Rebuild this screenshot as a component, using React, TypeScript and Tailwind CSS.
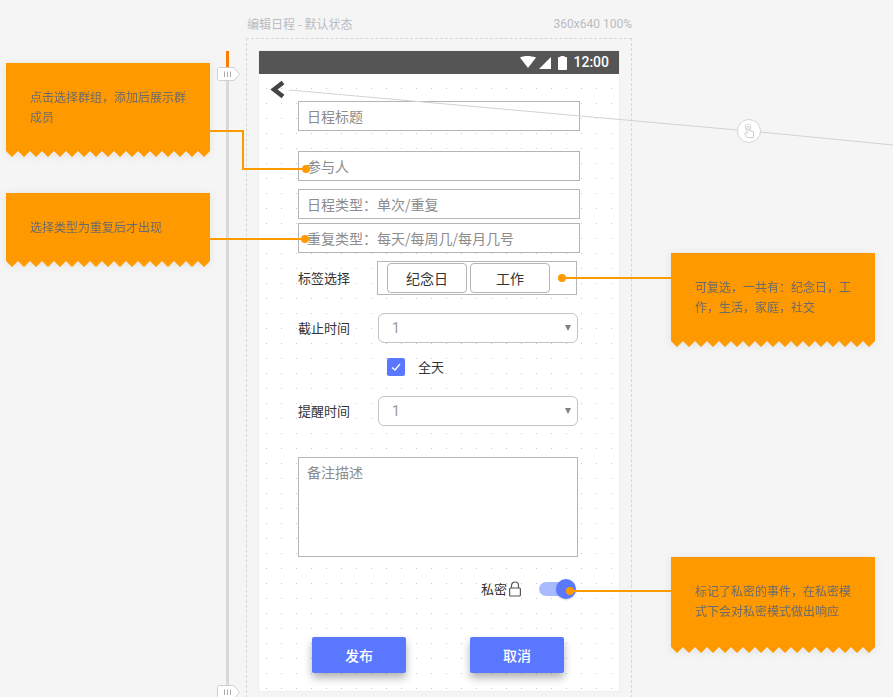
const ZIGZAG = Array.from({ length: 17 }, (_, i) => `${i * 12},0 ${i * 12 + 6},6 ${i * 12 + 12},0`).join(" ");

const notes = [
  { id: "group", box: "left-[6px] top-[63px]", body: "h-[88px] pt-[24px]", text: ["点击选择群组，添加后展示群", "成员"] },
  { id: "type", box: "left-[6px] top-[193px]", body: "h-[68px] pt-[24px]", text: ["选择类型为重复后才出现"] },
  { id: "tags", box: "left-[671px] top-[253px]", body: "h-[88px] pt-[24px]", text: ["可复选，一共有：纪念日，工", "作，生活，家庭，社交"] },
  { id: "private", box: "left-[671px] top-[557px]", body: "h-[90px] pt-[24px]", text: ["标记了私密的事件，在私密模", "式下会对私密模式做出响应"] },
];

function Note({ box, body, text }: { box: string; body: string; text: string[] }) {
  return (
    <div className={`absolute w-[204px] drop-shadow-[0_1px_4px_rgba(0,0,0,0.08)] ${box}`}>
      <div className={`bg-[#ff9900] px-[24px] text-[12px] leading-[20px] text-[#6b6b6b] ${body}`}>
        {text.map((line) => (
          <p key={line} className="whitespace-nowrap">{line}</p>
        ))}
      </div>
      <svg width="204" height="6" className="block">
        <polygon points={`0,0 ${ZIGZAG} 204,0`} fill="#ff9900" />
        <polygon points="0,0 204,0 204,0 0,0" fill="#ff9900" />
      </svg>
    </div>
  );
}

function Handle({ box }: { box: string }) {
  return (
    <svg width="24" height="15" viewBox="0 0 24 15" className={`absolute ${box}`}>
      <path d="M2.5 .5H17L22.5 7.5L17 13.5H2.5A2 2 0 0 1 .5 11.5V2.5A2 2 0 0 1 2.5 .5Z" fill="#fff" stroke="#d0d0d0" />
      <path d="M7.5 4.5V10M10.5 4.5V10M13.5 4.5V10" stroke="#aaa" />
    </svg>
  );
}

function TextBox({ label, className }: { label: string; className: string }) {
  return (
    <div className={`flex h-[30px] w-[282px] items-center border border-[#b5b5b5] bg-white pl-[8px] text-[14px] text-[#8c8c8c] ${className}`}>
      {label}
    </div>
  );
}

function SelectRow({ label, className }: { label: string; className: string }) {
  return (
    <div className={`flex h-[30px] items-center ${className}`}>
      <span className="w-[80px] text-[13px] text-[#333]">{label}</span>
      <div className="flex h-[30px] w-[200px] items-center justify-between rounded-[6px] border border-[#c4c4c4] bg-white pl-[13px] pr-[6px] font-['Roboto',sans-serif] text-[14px] text-[#999]">
        1
        <svg width="6" height="6" viewBox="0 0 6 6">
          <path d="M0 0H6L3 6Z" fill="#808080" />
        </svg>
      </div>
    </div>
  );
}

export default function App() {
  return (
    <div className="relative h-[697px] w-[893px] overflow-hidden bg-[#f5f5f5] pl-[246px] font-['Noto_Sans_CJK_SC','Noto_Sans',sans-serif]">
      <div className="flex h-[38px] w-[386px] items-center justify-between pl-px pt-[9px] text-[12px] text-[#b9bcc2]">
        <span>编辑日程 - 默认状态</span>
        <span className="font-['Roboto',sans-serif]">360x640 100%</span>
      </div>

      <div className="h-[680px] w-[386px] border border-dashed border-[#d6d6d6] pl-[11px] pt-[11px]">
        <div className="h-[642px] w-[362px] border border-[#eeeeee] bg-white bg-[radial-gradient(circle,#c9c9c9_0.6px,transparent_1px)] bg-[length:15px_15px]">
          <div className="flex h-[23px] items-center justify-end gap-[4px] bg-[#555555] pr-[10px] text-white">
            <svg width="50" height="14" viewBox="0 0 50 14" className="mr-[-1px]">
              <path d="M4 1.5C8 -.5 14 -.5 20 1.5L12 12Z" fill="#fff" transform="translate(-4 0)" />
              <path d="M19 13L31 1V13Z" fill="#fff" />
              <rect x="38" y="1" width="9" height="13" rx="1" fill="#fff" />
              <rect x="40.5" y="0" width="4" height="2" fill="#fff" />
            </svg>
            <span className="font-['Roboto',sans-serif] text-[14px] font-medium">12:00</span>
          </div>

          <div className="h-[27px] pl-[11px] pt-[6px]">
            <svg width="18" height="20" viewBox="0 0 18 20" className="block">
              <path d="M13 2.5L4 9.5L13 16.5" fill="none" stroke="#444" strokeWidth="4.5" />
            </svg>
          </div>

          <div className="pl-[39px]">
            <TextBox label="日程标题" className="" />
            <TextBox label="参与人" className="mt-[20px]" />
            <TextBox label="日程类型：单次/重复" className="mt-[8px]" />
            <TextBox label="重复类型：每天/每周几/每月几号" className="mt-[4px]" />

            <div className="mt-[8px] flex h-[34px] items-center">
              <span className="w-[79px] text-[13px] text-[#333]">标签选择</span>
              <div className="flex h-[34px] w-[200px] items-center gap-[3px] border border-[#b5b5b5] bg-white pl-[9px]">
                <div className="flex h-[30px] w-[80px] items-center justify-center rounded-[4px] border border-[#b5b5b5] text-[14px] text-[#333]">纪念日</div>
                <div className="flex h-[30px] w-[80px] items-center justify-center rounded-[4px] border border-[#b5b5b5] text-[14px] text-[#333]">工作</div>
              </div>
            </div>

            <SelectRow label="截止时间" className="mt-[18px]" />

            <div className="mt-[15px] flex h-[18px] items-center pl-[89px]">
              <div className="flex h-[18px] w-[18px] items-center justify-center rounded-[2px] bg-[#5a78ff]">
                <svg width="12" height="12" viewBox="0 0 12 12">
                  <path d="M2 6.5L5 9L10 3" fill="none" stroke="#fff" strokeWidth="1.3" />
                </svg>
              </div>
              <span className="ml-[13px] text-[13px] text-[#333]">全天</span>
            </div>

            <SelectRow label="提醒时间" className="mt-[20px]" />

            <div className="mt-[31px] h-[100px] w-[280px] border border-[#b5b5b5] bg-white pl-[8px] pt-[4px] text-[14px] text-[#8c8c8c]">备注描述</div>

            <div className="mt-[22px] flex h-[20px] w-[280px] items-center pl-[183px]">
              <span className="text-[13px] text-[#333]">私密</span>
              <svg width="14" height="16" viewBox="0 0 14 16" className="ml-px">
                <path d="M3.5 7V4.5A3.5 3.5 0 0 1 10.5 4.5V7" fill="none" stroke="#555" strokeWidth="1.2" />
                <rect x="1.6" y="7" width="10.8" height="8" rx="1" fill="none" stroke="#555" strokeWidth="1.2" />
              </svg>
              <div className="relative ml-[17px] h-[14px] w-[30px] rounded-full bg-[#a9bbff]">
                <div className="absolute left-[17px] top-[-3px] h-[20px] w-[20px] rounded-full bg-[#5a78ff] shadow-[0_1px_2px_rgba(0,0,0,0.2)]" />
              </div>
            </div>

            <div className="mt-[38px] flex gap-[64px] pl-[14px]">
              <div className="flex h-[36px] w-[94px] items-center justify-center rounded-[2px] bg-[#5a78ff] text-[14px] font-medium text-white shadow-[0_5px_8px_rgba(0,0,0,0.3)]">发布</div>
              <div className="flex h-[36px] w-[94px] items-center justify-center rounded-[2px] bg-[#5a78ff] text-[14px] font-medium text-white shadow-[0_5px_8px_rgba(0,0,0,0.3)]">取消</div>
            </div>
          </div>
        </div>
      </div>

      {/* timeline slider */}
      <div className="absolute left-[226px] top-[51px] h-[646px] w-[3px] bg-[#d9d9d9]">
        <div className="h-[16px] bg-[#ff7a00]" />
      </div>
      <Handle box="left-[217px] top-[67px]" />
      <Handle box="left-[217px] top-[685px]" />

      {notes.map((note) => (
        <Note key={note.id} box={note.box} body={note.body} text={note.text} />
      ))}

      {/* connectors */}
      <svg width="893" height="697" className="pointer-events-none absolute left-0 top-0">
        <path d="M289 90L737.5 130M760.5 132L893 145" stroke="#cfd3d6" fill="none" />
        <circle cx="749" cy="131" r="11.5" fill="#fff" stroke="#d5d5d5" />
        <circle cx="748" cy="127" r="3" fill="none" stroke="#d8d8d8" />
        <path d="M747 137.500L744.500 133.500L746 132.500L747 133.500V126.500H749V130.500L753.500 131.500V137.500Z" fill="#fff" stroke="#cfcfcf" />
        <path d="M210 131H243V169H306M210 239H305M562 278H671M571 591H671" stroke="#ff9900" strokeWidth="2" fill="none" />
        <circle cx="306" cy="169" r="4" fill="#ff9900" />
        <circle cx="305" cy="239" r="4" fill="#ff9900" />
        <circle cx="562" cy="278" r="4" fill="#ff9900" />
        <circle cx="570" cy="591" r="4" fill="#ff9900" />
      </svg>
    </div>
  );
}
